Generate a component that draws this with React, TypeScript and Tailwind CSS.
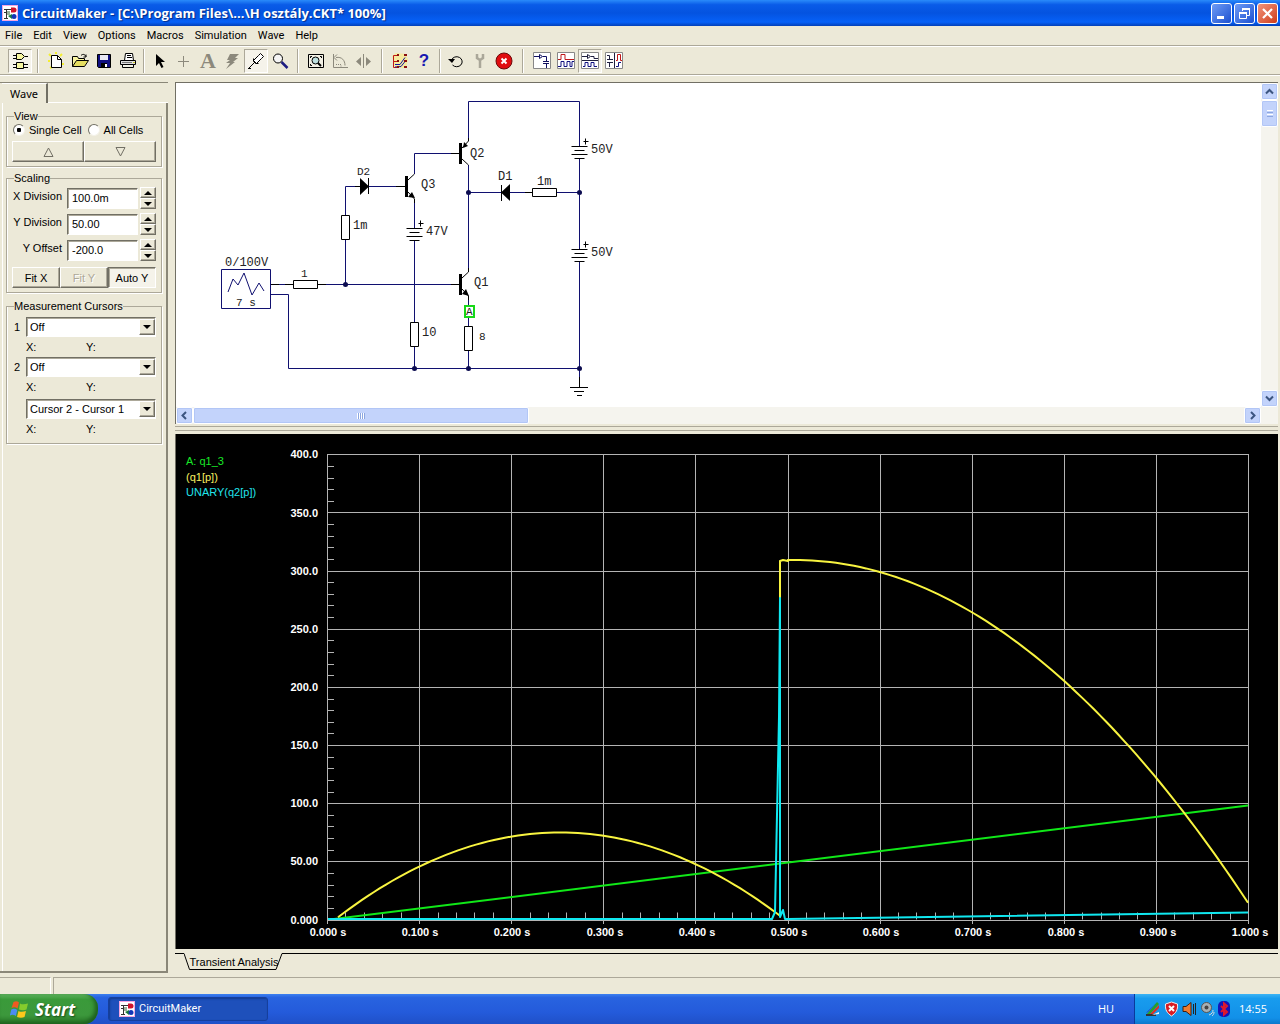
import React from "react";

const raised =
  "border border-t-white border-l-white border-b-[#716f64] border-r-[#716f64] shadow-[inset_-1px_-1px_0_#aca899]";
const sunken =
  "border border-t-[#716f64] border-l-[#716f64] border-b-white border-r-white shadow-[inset_1px_1px_0_#aca899]";

/* ---------- icons ---------- */

function Icon({ children, size = 18 }: { children: React.ReactNode; size?: number }) {
  return (
    <svg width={size} height={size} viewBox="0 0 18 18" fill="none" stroke="#000" aria-hidden="true" className="shrink-0">
      {children}
    </svg>
  );
}

function AppIcon() {
  return (
    <svg width="16" height="16" viewBox="0 0 16 16" aria-hidden="true" className="shrink-0">
      <rect width="16" height="16" fill="#fff" />
      <rect x=".5" y=".5" width="15" height="15" fill="none" stroke="#f4a6e0" />
      <path d="M2 4.500h7M2 7.500h3M4.500 4v9M2 13.500h4" stroke="#333" fill="none" />
      <path d="M5 6h3v4H5z" fill="#9ab09a" />
      <path d="M9 2.500h3a2.500 2.500 0 0 1 0 5H9z" fill="#d0142c" />
      <path d="M6 11l4-2v5z" fill="#18803a" />
      <circle cx="12" cy="11.500" r="2.500" fill="#1436b8" />
    </svg>
  );
}

const icons: Record<string, React.ReactNode> = {
  parts: (
    <Icon>
      <path d="M5.500 1.500h5l3 3-3 3h-5zM5.500 10.500h7v6h-7z" fill="#f6f6a0" />
      <path d="M2 3.500h3M2 6.500h3M14 4.500h3M2 12.500h3M2 15.500h3M13 12.500h4M13 15.500h4" />
    </Icon>
  ),
  new: (
    <Icon>
      <path d="M2 2l2 2M9 0v2M15 2l-2 2M1 9h2M15 12h2M3 16l2-1" stroke="#f4ef30" strokeWidth="2" />
      <path d="M4.500 3.500h6l4 4v8h-10z" fill="#fff" />
      <path d="M10.500 3.500v4h4" />
    </Icon>
  ),
  open: (
    <Icon>
      <path d="M1.500 14.500v-10h5l1 2h6v3" fill="#f8f4a0" />
      <path d="M1.500 14.500l4-6h12l-4 6z" fill="#e5de60" />
      <path d="M10 3.500c2-2 4-1 5 1m0-2v2.500h-2.500" />
    </Icon>
  ),
  save: (
    <Icon>
      <path d="M2.500 2.500h13v13h-12l-1-1z" fill="#101080" />
      <path d="M5 3h8v5H5z" fill="#e8e8f4" stroke="none" />
      <path d="M6 11h6v4H6z" fill="#000" stroke="none" />
      <path d="M10 12h2v3h-2z" fill="#fff" stroke="none" />
    </Icon>
  ),
  print: (
    <Icon>
      <path d="M5.500 8.500l1-7h7l1 7" fill="#fff" />
      <path d="M8 3.500h4M8 5.500h5" />
      <path d="M1.500 8.500h15v4h-15z" fill="#ddd" />
      <path d="M3.500 12.500h11v3h-11z" fill="#f4f4e8" />
      <path d="M3 10.500h10" stroke="#777" />
      <path d="M14 10.500h2" stroke="#c9c020" />
    </Icon>
  ),
  arrow: (
    <Icon>
      <path d="M5 2v12l3-3 2.500 5 2-1L10 10h4z" fill="#000" stroke="none" />
    </Icon>
  ),
  plus: (
    <Icon>
      <path d="M8.500 4v11M3 9.500h11" stroke="#8c897c" />
    </Icon>
  ),
  bolt: (
    <Icon>
      <path d="M7 2h9l-4 4h3l-5 4h2l-9 7 4-6H3l4-3H4z" fill="#8c897c" stroke="none" />
    </Icon>
  ),
  probe: (
    <Icon>
      <path d="M1.500 16.500l6-6M6.500 8.500l5-5 2-2 3 3-2 2-5 5z" fill="#fff" />
      <path d="M6.500 6.500v3l2 2h3M1 16.500h3" />
    </Icon>
  ),
  zoom: (
    <Icon>
      <circle cx="7" cy="6.500" r="4.500" fill="#f4f4f4" />
      <path d="M10.500 10l6 6" stroke="#1c1c80" strokeWidth="2.500" />
    </Icon>
  ),
  fit: (
    <Icon>
      <path d="M1.500 2.500h15v13h-15z" fill="#f2f0e4" />
      <circle cx="8.500" cy="8.500" r="3.500" fill="#bfe0e0" />
      <path d="M11 11l3 3" strokeWidth="2" />
      <path d="M3.500 6V4.500H5M13 4.500h1.500V6M3.500 12v1.500H5" />
    </Icon>
  ),
  rotate: (
    <Icon>
      <path d="M2.500 2v13.500H17" stroke="#8c897c" />
      <path d="M5 5.500c6-1 9 3 9 8M3 5.500l3-3M3 5.500l3 3" stroke="#8c897c" />
      <path d="M5 12.500h5v3" stroke="#8c897c" strokeDasharray="1 1" />
    </Icon>
  ),
  mirror: (
    <Icon>
      <path d="M8.500 2v14" stroke="#8c897c" />
      <path d="M6 5v9L1 9.500zM11 5v9l5-4.500z" fill="#8c897c" stroke="none" />
    </Icon>
  ),
  trace: (
    <Icon>
      <path d="M1 4l4-3 10 1 2 6-2 8H4z" fill="#f5eaa0" stroke="none" />
      <path d="M6 3.500H2.500v12H6M2.500 9.500H6" stroke="#c01818" />
      <path d="M4 12.500h5l5-7M4 15l6-.5 4-5" stroke="#1616a0" />
      <path d="M6 2h2v2H6zM13 2h3v2h-3zM6 8h2v2H6zM13 8h3v2h-3zM6 14h2v2H6zM13 14h3v2h-3z" fill="#8a1010" stroke="none" />
    </Icon>
  ),
  reset: (
    <Icon>
      <path d="M4.500 8a5.500 5 0 1 1 1 5" />
      <path d="M1 7h7l-3 4z" fill="#000" stroke="none" />
    </Icon>
  ),
  tool: (
    <Icon>
      <path d="M6 2v4l3 2 3-2V2M9 8v8" stroke="#aaa799" strokeWidth="2.500" />
    </Icon>
  ),
  stop: (
    <Icon>
      <circle cx="9" cy="9" r="8" fill="#e00d10" stroke="#6c0a0a" />
      <path d="M6.500 6.500l5 5M11.500 6.500l-5 5" stroke="#fff" strokeWidth="2" />
    </Icon>
  ),
  view1: (
    <Icon>
      <path d="M.5.500h17v16H.5z" fill="#fff" stroke="#888" />
      <path d="M1 4.500h5M6.500 2.500v4l3-2zM10 4.500h3.500v5M10 9.500h6M10 11.500h6M13.500 12v4" stroke="#101060" />
    </Icon>
  ),
  view2: (
    <Icon>
      <path d="M.5.500h17v16H.5z" fill="#fff" stroke="#888" />
      <path d="M1 7.500h3v-5h4v5h9" stroke="#c01818" />
      <path d="M1 14.500h3v-5h3v5h3v-5h3v5h2v-5h2" stroke="#101080" />
    </Icon>
  ),
  view3: (
    <Icon>
      <path d="M.5.500h17v16H.5z" fill="#fff" stroke="#888" />
      <path d="M1 4.500h5M6.500 2.500v4l3-2zM10 4.500h3v2h4M1 8.500h16" stroke="#202040" />
      <path d="M2 14.500h2v-4h3v4h3v-4h3v4h3" stroke="#101080" />
    </Icon>
  ),
  view4: (
    <Icon>
      <path d="M.5.500h17v16H.5z" fill="#fff" stroke="#888" />
      <path d="M2 3.500h2.500v4M2 7.500h6M2 10.500h6M4.500 11v4M9.500 1v15" stroke="#202040" />
      <path d="M11 8.500h1.500v-6h3v6H17" stroke="#c01818" />
      <path d="M11 14.500h2.500v-4H16" stroke="#101080" />
    </Icon>
  ),
};

/* ---------- toolbar ---------- */

function Tool({ name, label, pressed, children }: { name?: string; label: string; pressed?: boolean; children?: React.ReactNode }) {
  return (
    <button
      aria-label={label}
      aria-pressed={pressed}
      className={
        "flex h-6 w-6 shrink-0 items-center justify-center " +
        (pressed ? "border border-t-[#aca899] border-l-[#aca899] border-b-white border-r-white bg-[#f5f3ea]" : "")
      }
    >
      {name ? icons[name] : children}
    </button>
  );
}

function Sep({ width = "w-3" }: { width?: string }) {
  return (
    <div className={"flex h-6 shrink-0 justify-center " + width}>
      <div className="w-0.5 border-l border-[#aca899] bg-white" />
    </div>
  );
}

function Toolbar() {
  return (
    <div role="toolbar" className="flex h-7 items-center border-b border-[#aca899] pl-2">
      <Tool name="parts" label="Parts" pressed />
      <Sep />
      <Tool name="new" label="New" />
      <Tool name="open" label="Open" />
      <Tool name="save" label="Save" />
      <Tool name="print" label="Print" />
      <Sep width="w-2" />
      <Tool name="arrow" label="Arrow" />
      <Tool name="plus" label="Wire" />
      <Tool label="Text">
        <span className="font-['Liberation_Serif',serif] text-[22px] leading-none font-bold text-[#8c897c]">A</span>
      </Tool>
      <Tool name="bolt" label="Delete" />
      <Tool name="probe" label="Probe" pressed />
      <Tool name="zoom" label="Zoom" />
      <Sep />
      <Tool name="fit" label="Fit to window" />
      <Tool name="rotate" label="Rotate" />
      <Tool name="mirror" label="Mirror" />
      <Sep />
      <Tool name="trace" label="Trace" />
      <Tool label="Help">
        <span className="font-['Liberation_Sans',sans-serif] text-[17px] leading-none font-bold text-[#1818b0]">?</span>
      </Tool>
      <Sep width="w-2" />
      <Tool name="reset" label="Reset" />
      <Tool name="tool" label="Step" />
      <Tool name="stop" label="Stop" />
      <Sep width="w-3.5" />
      <Tool name="view1" label="Schematic only" />
      <Tool name="view2" label="Waveforms only" />
      <Tool name="view3" label="Split horizontally" pressed />
      <Tool name="view4" label="Split vertically" />
    </div>
  );
}

/* ---------- title ---------- */

function TitleBar() {
  const base = "flex h-[21px] w-[21px] items-center justify-center rounded-[3px] border border-white";
  return (
    <header className="flex h-[26px] items-center gap-1 bg-[linear-gradient(#2a8bfa_0%,#0a5ce8_18%,#0453e0_50%,#0661f8_85%,#0340b8_100%)] pr-0.5 pl-0.5">
      <AppIcon />
      <h1 className="flex-1 truncate font-['Open_Sans','Noto_Sans',sans-serif] text-[13px] leading-5 font-bold text-white [text-shadow:1px_1px_1px_#062c86]">
        CircuitMaker - [C:\Program Files\...\H osztály.CKT* 100%]
      </h1>
      <div className="flex gap-0.5">
        <button aria-label="Minimize" className={base + " bg-linear-to-br from-[#6f9bf5] to-[#1c4fd0]"}>
          <svg width="19" height="19"><path d="M5 12h7v3H5z" fill="#fff" /></svg>
        </button>
        <button aria-label="Restore" className={base + " bg-linear-to-br from-[#6f9bf5] to-[#1c4fd0]"}>
          <svg width="19" height="19" fill="none" stroke="#fff">
            <path d="M7.500 7V4.500h7v7H12" /><path d="M7 5h8" strokeWidth="2" />
            <path d="M4.500 8.500h7v6h-7z" /><path d="M4 9h8" strokeWidth="2" />
          </svg>
        </button>
        <button aria-label="Close" className={base + " bg-linear-to-br from-[#f0937a] to-[#cf3a12]"}>
          <svg width="19" height="19"><path d="M5 5l9 9M14 5l-9 9" stroke="#fff" strokeWidth="2.200" /></svg>
        </button>
      </div>
    </header>
  );
}

/* ---------- left panel ---------- */

function Group({ title, children }: { title: string; children: React.ReactNode }) {
  return (
    <fieldset className="mr-1 ml-[3px] min-w-0 border border-[#aca899] px-[5px] pb-1 shadow-[inset_1px_0_0_#fff,1px_1px_0_#fff]">
      <legend className="ml-0.5 leading-[14px]">{title}</legend>
      {children}
    </fieldset>
  );
}

function Spin({ id, label, value }: { id: string; label: string; value: string }) {
  const btn = "flex h-[11px] w-4 items-center justify-center " + raised;
  return (
    <div className="flex items-center">
      <label htmlFor={id} className="w-[50px] pb-1 text-right whitespace-nowrap">{label}</label>
      <input id={id} defaultValue={value} className={"ml-[5px] h-[21px] w-[71px] bg-white px-1 " + sunken} />
      <div className="ml-0.5 flex flex-col">
        <button aria-label={label + " up"} className={btn}>
          <svg width="8" height="4"><path d="M0 4l4-4 4 4z" /></svg>
        </button>
        <button aria-label={label + " down"} className={btn}>
          <svg width="8" height="4"><path d="M0 0h8l-4 4z" /></svg>
        </button>
      </div>
    </div>
  );
}

function Cursor({ id, num, name, value }: { id: string; num?: string; name: string; value: string }) {
  return (
    <div>
      <div className="flex items-center">
        <label htmlFor={id} className="w-3.5 shrink-0 pl-0.5">{num}</label>
        <div className="relative flex-1">
          <select id={id} aria-label={name} className={"h-5 w-full appearance-none bg-white pl-[3px] leading-[18px] " + sunken}>
            <option>{value}</option>
          </select>
          <span className={"pointer-events-none absolute top-0.5 right-px flex h-4 w-4 items-center justify-center bg-[#ece9d8] " + raised}>
            <svg width="8" height="4"><path d="M0 0h8l-4 4z" /></svg>
          </span>
        </div>
      </div>
      <div className="flex h-5 items-center pl-3.5">
        <span className="w-[60px]">X:</span>
        <span>Y:</span>
      </div>
    </div>
  );
}

function Radio({ label, checked }: { label: string; checked?: boolean }) {
  return (
    <label className="flex items-center gap-1 whitespace-nowrap">
      <input
        type="radio"
        name="cells"
        defaultChecked={checked}
        className="h-3 w-3 appearance-none rounded-full border border-t-[#716f64] border-l-[#716f64] border-b-[#f4f2e8] border-r-[#f4f2e8] bg-white checked:bg-[radial-gradient(circle,#000_2px,#fff_2.500px)]"
      />
      {label}
    </label>
  );
}

function SidePanel() {
  const btn = "flex h-[21px] flex-1 items-center justify-center " + raised;
  return (
    <aside className="flex w-[168px] shrink-0 flex-col border-t border-b-2 border-[#8a8778] pl-0.5">
      <div className="flex">
        <div role="tab" className="h-5 w-[46px] border-t border-r-2 border-t-white border-r-[#716f64] pl-2 leading-[19px] font-['Noto_Sans',sans-serif]">
          Wave
        </div>
        <div className="flex-1 border-b border-white" />
      </div>
      <div className="flex flex-1 flex-col gap-1 border-r-2 border-l border-r-[#8a8778] border-l-white pt-1.5">
        <Group title="View">
          <div className="flex h-[14px] gap-1.5 pl-px">
            <Radio label="Single Cell" checked />
            <Radio label="All Cells" />
          </div>
          <div className="mt-1 flex">
            <button aria-label="Previous cell" className={btn}>
              <svg width="11" height="10" fill="none" stroke="#716f64"><path d="M5.500 1l4.500 8.500H1z" /></svg>
            </button>
            <button aria-label="Next cell" className={btn}>
              <svg width="11" height="10" fill="none" stroke="#716f64"><path d="M1 .5h9L5.500 9z" /></svg>
            </button>
          </div>
        </Group>
        <Group title="Scaling">
          <div className="flex flex-col gap-1 pt-0.5">
            <Spin id="xdiv" label="X Division" value="100.0m" />
            <Spin id="ydiv" label="Y Division" value="50.00" />
            <Spin id="yoff" label="Y Offset" value="-200.0" />
          </div>
          <div className="mt-1.5 flex">
            <button className={btn}>Fit X</button>
            <button disabled className={btn + " text-[#aca899] [text-shadow:1px_1px_0_#fff]"}>Fit Y</button>
            <button aria-pressed="true" className={"h-[21px] flex-1 bg-[#f5f3ea] " + sunken}>Auto Y</button>
          </div>
        </Group>
        <div className="pt-0.5">
          <Group title="Measurement Cursors">
            <div className="pt-1">
              <Cursor id="c1" num="1" name="Cursor 1" value="Off" />
              <Cursor id="c2" num="2" name="Cursor 2" value="Off" />
              <div className="pt-0.5">
                <Cursor id="c3" name="Cursor difference" value="Cursor 2 - Cursor 1" />
              </div>
            </div>
          </Group>
        </div>
      </div>
    </aside>
  );
}

/* ---------- schematic ---------- */

function Battery({ x, y }: { x: number; y: number }) {
  return (
    <g stroke="#000">
      <path d={`M${x - 8} ${y}h16M${x - 5} ${y + 4}h10M${x - 8} ${y + 8}h16M${x - 5} ${y + 12}h10`} />
      <path d={`M${x + 4} ${y - 5}h5M${x + 6} ${y - 8}v6`} />
    </g>
  );
}

function Schematic() {
  return (
    <svg width="1084" height="324" viewBox="177 84 1084 324" fill="none" role="img" aria-label="Circuit schematic">
      <g stroke="#101070">
        <path d="M221.500 270.500h49v39h-49z" />
        <path d="M271 285.500h22M318 285.500h141M271 295.500h17.500v74h291" />
        <path d="M345.500 285v-44M345.500 216v-28.500H360M369 187.500h36" />
        <path d="M414.500 175v-20.500H459M414.500 200v29M414.500 242v81M414.500 347v22" />
        <path d="M468.500 142v-39.500h111V147M468.500 166v107M468.500 193.500H501M510 193.500h22M557 193.500h22" />
        <path d="M579.500 160v90M579.500 263v125M468.500 297v9M468.500 319v8M468.500 352v17" />
        <path d="M228 293l5-13 5 6 6-12 8 22 7-12 5 8" />
      </g>
      <g stroke="#000">
        <path d="M271 285.500h8M285 285.500h8M318 285.500h8M355 187.500h5M396 187.500h9M451 154.500h8M451 285.500h8M525 193.500h7" />
        <path d="M293.500 281.500h24v8h-24zM341.500 216.500h8v24h-8zM410.500 323.500h8v24h-8zM532.500 189.500h24v8h-24zM464.500 327.500h8v24h-8z" fill="#fff" />
        <path d="M408 181l6.500-6M408 193l6.500 7v4M462 149l6.500-7v-3M462 160l6.500 6M462 279l6.500-6v-4M462 290l6.500 7v4" />
        <path d="M368.500 179v16M501.500 186v16" />
        <path d="M570 388.500h18M574 392.500h10M577 396.500h5M579.500 378v10" />
      </g>
      <g fill="#000">
        <path d="M405 177h3v21h-3zM459 144h3v21h-3zM459 275h3v21h-3z" />
        <path d="M360 179v17l9-8.500zM510 185v17l-9-8.500z" />
        <path d="M415 199l-7-1 4-5zM463 149l1-6 4 4zM469 297l-7-2 4-5z" />
      </g>
      <Battery x={414.5} y={229.5} />
      <Battery x={579.5} y={147.5} />
      <Battery x={579.5} y={250.5} />
      <g fill="#0c0c50">
        {[[345.5, 285.5], [414.5, 369.5], [468.5, 369.5], [579.5, 369.5], [468.5, 193.5], [579.5, 193.5]].map(([x, y]) => (
          <circle key={`${x}-${y}`} cx={x} cy={y} r="2.5" />
        ))}
      </g>
      <rect x="465" y="307" width="9" height="11" fill="#fff" stroke="#18d818" strokeWidth="2" />
      <g fill="#222" className="font-['Liberation_Mono',monospace] text-[11px]">
        <text x="225" y="267" className="text-[12px]">0/100V</text>
        <text x="236" y="307">7 s</text>
        <text x="301" y="278">1</text>
        <text x="353" y="230" className="text-[12px]">1m</text>
        <text x="357" y="176">D2</text>
        <text x="421" y="189" className="text-[12px]">Q3</text>
        <text x="426" y="236" className="text-[12px]">47V</text>
        <text x="422" y="337" className="text-[12px]">10</text>
        <text x="470" y="158" className="text-[12px]">Q2</text>
        <text x="474" y="287" className="text-[12px]">Q1</text>
        <text x="479" y="341">8</text>
        <text x="498" y="181" className="text-[12px]">D1</text>
        <text x="537" y="186" className="text-[12px]">1m</text>
        <text x="591" y="154" className="text-[12px]">50V</text>
        <text x="591" y="257" className="text-[12px]">50V</text>
        <text x="466" y="316">A</text>
      </g>
    </svg>
  );
}

const thumb = "rounded-[2px] border border-white bg-[#c3d3fb] shadow-[inset_0_0_0_1px_#b2c6f6]";

function ScrollArrow({ d, label }: { d: string; label: string }) {
  return (
    <button aria-label={label} className={"flex h-[17px] w-[17px] shrink-0 items-center justify-center " + thumb}>
      <svg width="9" height="9" fill="none" stroke="#3c5580" strokeWidth="2"><path d={d} /></svg>
    </button>
  );
}

function SchematicPane() {
  return (
    <section className="border-t border-l border-[#716f64] bg-white">
      <div className="flex">
        <div className="min-w-0 flex-1 overflow-hidden pl-px">
          <Schematic />
        </div>
        <div className="flex w-[17px] flex-col bg-[#f5f4ee]">
          <ScrollArrow label="Scroll up" d="M1 6.500l3.500-3.500L8 6.500" />
          <div className={"flex h-[27px] flex-col items-center justify-center gap-px " + thumb}>
            <i className="h-px w-1.5 bg-white" /><i className="h-px w-1.5 bg-[#8ca6e0]" />
            <i className="h-px w-1.5 bg-white" /><i className="h-px w-1.5 bg-[#8ca6e0]" />
          </div>
          <div className="flex-1" />
          <ScrollArrow label="Scroll down" d="M1 2.500l3.500 3.500L8 2.500" />
        </div>
      </div>
      <div className="flex h-[17px] bg-[#f5f4ee] pr-[17px]">
        <ScrollArrow label="Scroll left" d="M6 1L2.500 4.500 6 8" />
        <div className={"flex w-[31%] items-center justify-center " + thumb}>
          <i className="h-1.5 w-px bg-white" /><i className="h-1.5 w-px bg-[#8ca6e0]" />
          <i className="h-1.5 w-px bg-white" /><i className="h-1.5 w-px bg-[#8ca6e0]" />
          <i className="h-1.5 w-px bg-white" /><i className="h-1.5 w-px bg-[#8ca6e0]" />
          <i className="h-1.5 w-px bg-white" /><i className="h-1.5 w-px bg-[#8ca6e0]" />
        </div>
        <div className="flex-1" />
        <ScrollArrow label="Scroll right" d="M3 1l3.500 3.500L3 8" />
      </div>
    </section>
  );
}

/* ---------- waveform chart ---------- */

const X0 = 327.5;
const Y0 = 920;
const DX = 92.1;
const DY = 58.15;

function curve(from: number, to: number, f: (x: number) => number) {
  const pts: string[] = [];
  for (let x = from; x < to; x += 6) pts.push(`${x},${f(x).toFixed(1)}`);
  pts.push(`${to},${f(to).toFixed(1)}`);
  return pts.join(" ");
}

const firstHump = curve(338, 780, (x) => 832.5 + 0.00172 * (x - 560) ** 2);
const secondHump = curve(788, 1248, (x) => 560 + 0.00167 * (x - 795) ** 2);

const yLabels = ["400.0", "350.0", "300.0", "250.0", "200.0", "150.0", "100.0", "50.00", "0.000"];
const xLabels = ["0.000 s", "0.100 s", "0.200 s", "0.300 s", "0.400 s", "0.500 s", "0.600 s", "0.700 s", "0.800 s", "0.900 s", "1.000 s"];

function Chart() {
  const snap = (n: number) => Math.floor(n) + 0.5;
  return (
    <svg viewBox="176 434 1102 515" className="block w-full bg-black font-['Liberation_Sans',sans-serif] text-[11px]" role="img" aria-label="Transient analysis waveforms">
      <g stroke="#b4b4b4">
        {yLabels.map((l, i) => <path key={l} d={`M${X0} ${snap(Y0 - (8 - i) * DY)}H1248`} />)}
        {xLabels.map((l, i) => <path key={l} d={`M${snap(X0 + i * DX)} 454V924`} />)}
        {Array.from({ length: 40 }, (_, i) => <path key={i} d={`M327 ${snap(Y0 - (i * DY) / 5)}h7`} />)}
        {Array.from({ length: 50 }, (_, i) => <path key={i} d={`M${snap(X0 + (i * DX) / 5)} 912.500v7`} />)}
      </g>
      <g fill="none" strokeWidth="2" strokeLinejoin="round">
        <path d="M334 919L1248 805.500" stroke="#10e818" />
        <polyline points={`${firstHump} 780,561 783,560 788,561 ${secondHump}`} stroke="#f8f440" />
        <path d="M328 919H772l3-7 4-195 1-119v319l3-7 2 9h3L1248 912.500" stroke="#10e8f0" />
      </g>
      <g fill="#fff" className="font-bold">
        {yLabels.map((l, i) => <text key={l} x="318" y={Math.round(458.4 + i * DY)} textAnchor="end">{l}</text>)}
      </g>
      <g fill="#fff" className="font-bold">
        {xLabels.map((l, i) => <text key={l} x={Math.round(328 + i * 92.2)} y="936" textAnchor="middle">{l}</text>)}
      </g>
      <text x="186" y="465" fill="#18e828">A: q1_3</text>
      <text x="186" y="481" fill="#f8f060">(q1[p])</text>
      <text x="186" y="496" fill="#20e4ec">UNARY(q2[p])</text>
    </svg>
  );
}

function SheetTabs() {
  return (
    <div className="mt-1 flex h-[18px]">
      <div className="w-[9px] border-t border-black" />
      <div className="relative">
        <svg aria-hidden="true" width="100" height="18" fill="none" stroke="#000" className="absolute inset-0">
          <path d="M0 .5L5.500 16.500H92L98 .5h2" />
        </svg>
        <button className="relative w-[100px] leading-[18px] whitespace-nowrap">Transient Analysis</button>
      </div>
      <div className="flex-1 border-t border-black" />
    </div>
  );
}

/* ---------- taskbar ---------- */

function Taskbar() {
  return (
    <footer className="flex h-[30px] items-stretch bg-[linear-gradient(#3c80f0_0%,#2863e0_12%,#245bdb_60%,#1f50c8_100%)] font-['Open_Sans','Noto_Sans',sans-serif] text-[11px] text-white">
      <button className="flex w-[98px] items-center gap-1.5 rounded-r-[14px] bg-[linear-gradient(#5fb35f_0%,#3a9a3a_18%,#3c983c_70%,#2a7a2a_100%)] pl-2.5 shadow-[inset_-3px_-2px_4px_#1d5f1d]">
        <svg width="19" height="19" viewBox="0 0 19 19" aria-hidden="true">
          <path d="M3.500 2c2-1 4-1 5.500.500L7.500 8.500c-2-1.500-4-1.500-6-.500z" fill="#ee5a22" />
          <path d="M10 3.500c2 1.200 5 1 8 0L16.500 9.500c-2 1-5 1-7.500 0z" fill="#86cc2c" />
          <path d="M1.300 9.500c2-1 4-1 6 .500L5.800 16c-2-1.500-4-1.500-6-.500z" fill="#4a8cf4" />
          <path d="M8.500 11c2 1.200 5 1 7.500 0l-1.500 6c-2 1-5 1-7.500 0z" fill="#fcc81c" />
        </svg>
        <span className="text-[17px] leading-none font-bold italic [text-shadow:1px_1px_2px_#174a17]">Start</span>
      </button>
      <button className="my-[3px] ml-2.5 flex w-[160px] items-center gap-1 rounded-[3px] border border-[#163f9c] bg-[#1e50bb] pl-2.5 shadow-[inset_1px_1px_2px_#123a90]">
        <AppIcon />
        <span className="font-['Roboto',sans-serif]">CircuitMaker</span>
      </button>
      <div className="flex-1" />
      <button aria-label="Input language" className="w-[56px] pb-px">HU</button>
      <div className="flex w-[146px] items-center gap-[3px] border-l border-[#0a3a9c] bg-[linear-gradient(#3cb4f4_0%,#189cee_15%,#1290e8_80%,#0c78cc_100%)] pl-2.5">
        <svg width="16" height="16" aria-hidden="true">
          <path d="M1 13h10v2H1z" fill="#333" /><path d="M2 13L12 1l2 2-9 10z" fill="#28a028" />
          <path d="M5 13l9-9v3l-6 6z" fill="#e03020" /><path d="M1 12L9 4l2-2-8 9z" fill="#2434c0" /><path d="M7 14l7-3v2z" fill="#f4f4f4" />
        </svg>
        <svg width="15" height="16" aria-hidden="true">
          <path d="M7.500 1l6 2c.5 6-1.500 9-6 12C3 12 1 9 1.500 3z" fill="#d81c24" stroke="#eee" />
          <path d="M5 5l5 5M10 5l-5 5" stroke="#fff" strokeWidth="2" />
        </svg>
        <svg width="15" height="16" aria-hidden="true">
          <path d="M1 5.500h3l5-4v13l-5-4H1z" fill="#f07c30" stroke="#402010" /><path d="M11.500 3v10M13.500 2v12" stroke="#222" />
        </svg>
        <svg width="15" height="16" fill="none" aria-hidden="true">
          <circle cx="6.500" cy="6.500" r="5" fill="#a8b0b4" stroke="#555" /><circle cx="6.500" cy="6.500" r="2" fill="#444" />
          <path d="M9 14c3-1 4-3 4-5M12 15c1-1 2-2 2-4" stroke="#ddd" />
        </svg>
        <svg width="12" height="16" fill="none" aria-hidden="true">
          <rect width="12" height="16" rx="5" fill="#1414b8" />
          <path d="M3 5l6 6-3 2.500v-11L9 5l-6 6" stroke="#e0182c" strokeWidth="2" />
        </svg>
        <time className="ml-1.5 text-[11px]">14:55</time>
      </div>
    </footer>
  );
}

const menus = ["File", "Edit", "View", "Options", "Macros", "Simulation", "Wave", "Help"];

export default function App() {
  return (
    <div className="flex min-h-screen flex-col bg-[#ece9d8] font-['Liberation_Sans',sans-serif] text-[11px] leading-[14px] text-black">
      <TitleBar />
      <nav className="flex h-5 items-center gap-[11px] border-b border-[#aca899] pl-[5px] font-['Roboto',sans-serif]">
        {menus.map((m) => (
          <button key={m}>{m}</button>
        ))}
      </nav>
      <div className="border-t border-white" />
      <Toolbar />
      <div className="h-[7px] border-t border-white" />
      <main className="flex flex-1 gap-[7px] pb-1">
        <SidePanel />
        <div className="flex min-w-0 flex-1 flex-col pr-0.5">
          <SchematicPane />
          <div className="mt-0.5 mb-[3px] flex h-[5px] flex-col border-y border-[#aca899]" />
          <div className="border-l border-[#716f64]">
            <Chart />
          </div>
          <SheetTabs />
        </div>
      </main>
      <div role="status" className="flex h-[17px] gap-0.5">
        <div className="w-[51px] border-t border-r border-t-[#aca899] border-r-white" />
        <div className="flex-1 border-t border-l border-[#aca899]" />
      </div>
      <Taskbar />
    </div>
  );
}
